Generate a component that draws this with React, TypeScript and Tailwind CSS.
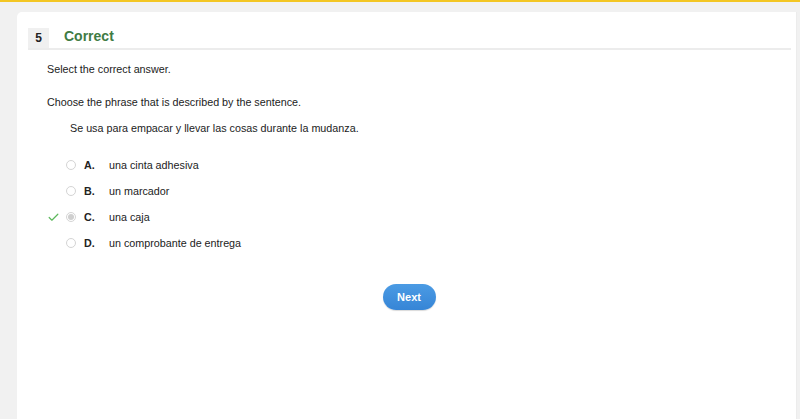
import { Check } from 'lucide-react';

const options = [
  { letter: 'A.', text: 'una cinta adhesiva', picked: false },
  { letter: 'B.', text: 'un marcador', picked: false },
  { letter: 'C.', text: 'una caja', picked: true },
  { letter: 'D.', text: 'un comprobante de entrega', picked: false },
];

export default function App() {
  return (
    <div className="h-[419px] w-[800px] overflow-hidden bg-[#f1f1f1] font-['Liberation_Sans',Arial,sans-serif] text-[#222]">
      <div className="h-[2px] bg-[#f3c623]" />
      <div className="flex h-[417px] pl-[17px] pt-[10px] pr-[3px]">
        <div className="flex flex-1 flex-col rounded-tl-[5px] border-r border-[#ececec] bg-white pl-[11px] pr-[5px] pt-[16px]">
          <div className="flex h-[22px] items-center border-b-2 border-[#ececec]">
            <div className="flex h-[20px] w-[21px] items-center justify-center bg-[#f0f0f0] text-[12px] font-bold">5</div>
            <div className="ml-[15px] -mt-[3px] text-[14px] font-bold text-[#3f7b44]">Correct</div>
          </div>
          <div className="pl-[19px] pt-[11px] text-[10.75px] leading-[16px]">
            <p>Select the correct answer.</p>
            <p className="mt-[17px]">Choose the phrase that is described by the sentence.</p>
            <p className="mt-[10px] pl-[23px]">Se usa para empacar y llevar las cosas durante la mudanza.</p>
            <div className="mt-[21px] flex flex-col gap-[10px]">
              {options.map((o) => (
                <div key={o.letter} className="flex h-[16px] items-center">
                  <div className="flex w-[19px] justify-start">
                    {o.picked && <Check className="h-[13px] w-[13px] text-[#5cb85c]" strokeWidth={2.2} />}
                  </div>
                  <div className="flex h-[10px] w-[10px] items-center justify-center rounded-full border border-[#d4d4d4] bg-white">
                    {o.picked && <div className="h-[6px] w-[6px] rounded-full bg-[#cfcfcf]" />}
                  </div>
                  <span className="ml-[8px] w-[25px] font-bold">{o.letter}</span>
                  <span>{o.text}</span>
                </div>
              ))}
            </div>
          </div>
          <div className="mt-[33px] flex justify-center pr-[1px]">
            <button className="h-[26px] w-[53px] rounded-full bg-gradient-to-b from-[#4b9be4] to-[#3685d6] text-[11px] font-bold text-white shadow-[0_1px_1px_rgba(0,0,0,0.15)]">
              Next
            </button>
          </div>
        </div>
      </div>
    </div>
  );
}
